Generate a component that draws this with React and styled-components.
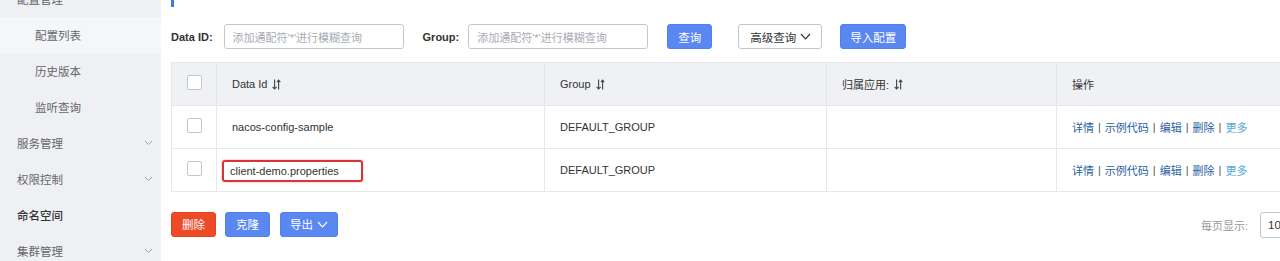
import styled, { createGlobalStyle } from "styled-components";

const GlobalStyle = createGlobalStyle`
  html, body {
    margin: 0;
    padding: 0;
    width: 1280px;
    height: 261px;
    overflow: hidden;
    background: #fff;
  }
  body {
    font-family: "Liberation Sans", "Noto Sans CJK SC", sans-serif;
    font-size: 11px;
    color: #333;
  }
`;

const Page = styled.div`
  display: flex;
  width: 1280px;
  height: 261px;
  overflow: hidden;
`;

const Sidebar = styled.div`
  width: 161px;
  flex-shrink: 0;
  background: #eef0f4;
  height: 261px;
  overflow: hidden;
`;

const MenuList = styled.div`
  margin-top: -19px;
  display: flex;
  flex-direction: column;
`;

const MenuItem = styled.div`
  height: 36px;
  display: flex;
  align-items: center;
  justify-content: space-between;
  padding-left: ${(p) => (p.$sub ? "35px" : "17px")};
  padding-right: 8px;
  font-size: 11.5px;
  color: ${(p) => (p.$strong ? "#333" : "#666")};
  font-weight: ${(p) => (p.$strong ? 500 : 400)};
  background: ${(p) => (p.$active ? "#f5f6f9" : "transparent")};
`;

const Chevron = () => (
  <svg width="9" height="6" viewBox="0 0 9 6">
    <path d="M1 1 L4.5 4.5 L8 1" fill="none" stroke="#a0a4ad" strokeWidth="1" />
  </svg>
);

const Main = styled.div`
  flex: 1;
  padding-left: 10px;
  display: flex;
  flex-direction: column;
  min-width: 0;
`;

const TitleMark = styled.div`
  width: 3px;
  height: 7px;
  background: #3e7ce0;
`;

const SearchRow = styled.div`
  display: flex;
  align-items: center;
  margin-top: 17px;
  height: 25px;
`;

const Label = styled.span`
  font-weight: 700;
  color: #333;
  font-size: 11px;
  margin-right: ${(p) => p.$gap}px;
`;

const Input = styled.div`
  width: 180px;
  height: 25px;
  box-sizing: border-box;
  border: 1px solid #c4c6cf;
  border-radius: 3px;
  display: flex;
  align-items: center;
  padding-left: 8px;
  color: #a8abb3;
  font-size: 11px;
  margin-right: ${(p) => p.$gap}px;
`;

const Button = styled.div`
  height: 25px;
  box-sizing: border-box;
  padding: 0 ${(p) => p.$pad || 10}px 0 ${(p) => p.$padL || p.$pad || 10}px;
  display: inline-flex;
  align-items: center;
  gap: 4px;
  border-radius: 3px;
  font-size: 11.5px;
  flex-shrink: 0;
  margin-right: ${(p) => p.$gap || 0}px;
  color: ${(p) => (p.$kind === "normal" ? "#333" : "#fff")};
  background: ${(p) =>
    p.$kind === "danger" ? "#ee4a28" : p.$kind === "normal" ? "#fff" : "#5a87f0"};
  border: 1px solid
    ${(p) =>
      p.$kind === "danger" ? "#e04422" : p.$kind === "normal" ? "#c4c6cf" : "#5080ee"};
`;

const Down = ({ color }) => (
  <svg width="11" height="7" viewBox="0 0 11 7">
    <path d="M1 1 L5.5 5.8 L10 1" fill="none" stroke={color} strokeWidth="1.2" />
  </svg>
);

const Table = styled.div`
  margin-top: 13px;
  border-top: 1px solid #e6e7eb;
  border-left: 1px solid #e6e7eb;
  width: 1120px;
`;

const Row = styled.div`
  display: grid;
  grid-template-columns: 45px 328px 282px 230px 235px;
  height: 43px;
  background: ${(p) => (p.$head ? "#eff1f5" : "#fff")};
  border-bottom: 1px solid #e6e7eb;
  box-sizing: border-box;
`;

const Cell = styled.div`
  display: flex;
  align-items: center;
  padding-left: ${(p) => (p.$check ? "0" : "15px")};
  justify-content: ${(p) => (p.$check ? "center" : "flex-start")};
  border-right: 1px solid #e6e7eb;
  color: #333;
  font-size: 11px;
  gap: ${(p) => (p.$head ? 5 : 0)}px;
  white-space: nowrap;
`;

const Checkbox = styled.div`
  width: 13px;
  height: 13px;
  border: 1px solid #c4c6cf;
  border-radius: 2px;
  background: #fff;
  margin-top: -4px;
`;

const Highlight = styled.span`
  border: 2px solid #d6343a;
  border-radius: 3px;
  padding: 3px 22px 3px 6px;
  margin-left: -10px;
  margin-top: 1px;
  box-shadow: 0 0 2px rgba(214, 52, 58, 0.5);
`;

const SortIcon = () => (
  <svg width="9" height="11" viewBox="0 0 9 11">
    <path d="M2.6 0.5 V10 M0.6 7.8 L2.6 10 L4.6 7.8" fill="none" stroke="#444" strokeWidth="1.1" />
    <path d="M6.6 10.5 V1 M4.9 3.1 L6.6 1 L8.3 3.1" fill="none" stroke="#444" strokeWidth="1.1" />
  </svg>
);

const Link = styled.span`
  font-size: 11px;
  color: ${(p) => (p.$light ? "#57a9d8" : "#2a5fa3")};
`;

const Sep = styled.span`
  color: #555;
  margin: 0 4px;
`;

const Footer = styled.div`
  display: flex;
  align-items: center;
  margin-top: 18px;
  width: 1130px;
`;

const Pager = styled.div`
  margin-left: auto;
  display: flex;
  align-items: center;
  color: #999;
  font-size: 11px;
  margin-top: 2px;
`;

const PageSize = styled.div`
  margin-left: 12px;
  width: 41px;
  height: 26px;
  box-sizing: border-box;
  border: 1px solid #c4c6cf;
  border-radius: 3px;
  display: flex;
  align-items: center;
  padding-left: 7px;
  color: #333;
  font-size: 11.5px;
`;

const menu = [
  { label: "配置管理" },
  { label: "配置列表", sub: true, active: true },
  { label: "历史版本", sub: true },
  { label: "监听查询", sub: true },
  { label: "服务管理", chevron: true },
  { label: "权限控制", chevron: true },
  { label: "命名空间", strong: true },
  { label: "集群管理", chevron: true },
];

const rows = [
  { id: "nacos-config-sample", group: "DEFAULT_GROUP" },
  { id: "client-demo.properties", group: "DEFAULT_GROUP", mark: true },
];

const Ops = () => (
  <>
    <Link>详情</Link>
    <Sep>|</Sep>
    <Link>示例代码</Link>
    <Sep>|</Sep>
    <Link>编辑</Link>
    <Sep>|</Sep>
    <Link>删除</Link>
    <Sep>|</Sep>
    <Link $light>更多</Link>
  </>
);

export default function App() {
  return (
    <>
      <GlobalStyle />
      <Page>
        <Sidebar>
          <MenuList>
            {menu.map((m) => (
              <MenuItem key={m.label} $sub={m.sub} $active={m.active} $strong={m.strong}>
                <span>{m.label}</span>
                {m.chevron && <Chevron />}
              </MenuItem>
            ))}
          </MenuList>
        </Sidebar>
        <Main>
          <TitleMark />
          <SearchRow>
            <Label $gap={11}>Data ID:</Label>
            <Input $gap={19}>添加通配符'*'进行模糊查询</Input>
            <Label $gap={9}>Group:</Label>
            <Input $gap={19}>添加通配符'*'进行模糊查询</Input>
            <Button $pad={10} $gap={26}>查询</Button>
            <Button $kind="normal" $padL={11} $pad={10} $gap={18}>
              高级查询 <Down color="#333" />
            </Button>
            <Button $pad={9}>导入配置</Button>
          </SearchRow>
          <Table>
            <Row $head>
              <Cell $check>
                <Checkbox />
              </Cell>
              <Cell $head>
                Data Id <SortIcon />
              </Cell>
              <Cell $head>
                Group <SortIcon />
              </Cell>
              <Cell $head>
                归属应用: <SortIcon />
              </Cell>
              <Cell $head>操作</Cell>
            </Row>
            {rows.map((r) => (
              <Row key={r.id}>
                <Cell $check>
                  <Checkbox />
                </Cell>
                <Cell>{r.mark ? <Highlight>{r.id}</Highlight> : r.id}</Cell>
                <Cell>{r.group}</Cell>
                <Cell />
                <Cell>
                  <Ops />
                </Cell>
              </Row>
            ))}
          </Table>
          <Footer>
            <Button $kind="danger" $pad={10} $gap={9}>删除</Button>
            <Button $pad={10} $gap={10}>克隆</Button>
            <Button $pad={9}>
              导出 <Down color="#fff" />
            </Button>
            <Pager>
              每页显示:
              <PageSize>10</PageSize>
            </Pager>
          </Footer>
        </Main>
      </Page>
    </>
  );
}
